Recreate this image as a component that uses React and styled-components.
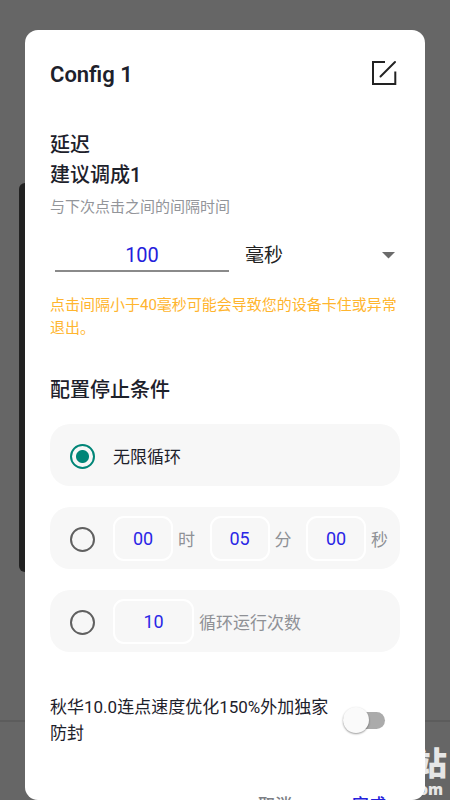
import { useState } from "react";
import styled, { createGlobalStyle } from "styled-components";

const GlobalStyle = createGlobalStyle`
  * {
    box-sizing: border-box;
  }
  body {
    margin: 0;
    background: #666;
    color: #1d212b;
    font-family: Roboto, "Noto Sans CJK SC", sans-serif;
  }
  button, input, select {
    margin: 0;
    padding: 0;
    border: none;
    border-radius: 0;
    background: none;
    color: inherit;
    font: inherit;
  }
`;

const Screen = styled.div`
  display: grid;
  height: 100vh;
  overflow: hidden;
`;

const Backdrop = styled.div`
  grid-area: 1 / 1;
  display: flex;
  flex-direction: column;
  justify-content: space-between;
  padding-top: 183px;
`;

const FloatingBar = styled.div`
  width: 56px;
  height: 389px;
  margin-left: 19px;
  border-radius: 6px;
  background: #212121;
`;

const BottomBar = styled.div`
  height: 80px;
  padding: 25px 3px 0 0;
  border-top: 2px solid #5c5c5c;
  color: #e6e6e6;
  text-align: right;
`;

const SiteName = styled.div`
  font-size: 32px;
  font-weight: 900;
  line-height: 34px;
`;

const SiteDomain = styled.div`
  padding-right: 4px;
  font-family: "Open Sans", sans-serif;
  font-size: 15px;
  font-weight: 800;
  line-height: 16px;
`;

const Overlay = styled.div`
  grid-area: 1 / 1;
  display: flex;
  min-height: 0;
  padding: 30px 25px 0;
  z-index: 1;
`;

const Dialog = styled.form`
  flex: 1;
  min-width: 0;
  padding: 23px 25px 0;
  border-radius: 13px;
  background: #fff;
  overflow: hidden;
`;

const Header = styled.header`
  display: flex;
  align-items: flex-start;
  justify-content: space-between;
  height: 44px;
  margin-bottom: 33px;
`;

const Title = styled.h1`
  margin: 0;
  font-size: 22px;
  font-weight: 600;
  line-height: 44px;
`;

const IconButton = styled.button`
  display: flex;
  padding: 6px 3px;
  color: #222;
  cursor: pointer;
`;

const SectionTitle = styled.h2`
  margin: 0;
  font-size: 20px;
  font-weight: 500;
  line-height: 30px;
`;

const Hint = styled.p`
  margin: 5px 0 21px;
  color: #93959a;
  font-size: 15px;
  line-height: 24px;
`;

const DelayRow = styled.div`
  display: grid;
  grid-template-columns: 1fr 155px;
  gap: 16px;
  padding-left: 5px;
`;

const DelayInput = styled.input`
  width: 100%;
  height: 32px;
  border-bottom: 2px solid #8a8a8a;
  color: #2420dc;
  font-size: 20px;
  text-align: center;
`;

const UnitPicker = styled.div`
  display: grid;
  align-items: center;
  height: 30px;

  select,
  svg {
    grid-area: 1 / 1;
  }

  svg {
    justify-self: end;
    margin-right: 5px;
    pointer-events: none;
  }
`;

const UnitSelect = styled.select`
  appearance: none;
  width: 100%;
  height: 30px;
  color: #222;
  font-size: 19px;
`;

const Warning = styled.p`
  margin: 22px 0 35px;
  color: #ffb52e;
  font-size: 15px;
  line-height: 23px;
`;

const Options = styled.div`
  display: flex;
  flex-direction: column;
  gap: 21px;
  margin-top: 19px;
`;

const Option = styled.div`
  display: flex;
  align-items: center;
  height: 62px;
  padding: 0 12px 0 20px;
  border-radius: 20px;
  background: #f7f7f7;
  font-size: 17px;
`;

const Radio = styled.input`
  appearance: none;
  flex: none;
  width: 25px;
  height: 25px;
  margin: 3px 18px 0 0;
  border: 2px solid #606060;
  border-radius: 50%;

  &:checked {
    border-color: #008577;
    background: radial-gradient(circle, #008577 6px, transparent 7px);
  }
`;

const TimeFields = styled.div`
  display: flex;
  flex: 1;
  justify-content: space-between;
`;

const Field = styled.label`
  display: flex;
  align-items: center;
  gap: 5px;
  color: #8f9196;
`;

const NumberInput = styled.input`
  width: ${(props) => (props.$wide ? 81 : 60)}px;
  height: 45px;
  border: 2px solid #fff;
  border-radius: 11px;
  color: #2a26e6;
  font-size: 18px;
  text-align: center;
`;

const SwitchRow = styled.label`
  display: flex;
  align-items: center;
  justify-content: space-between;
  margin-top: 42px;
  padding-right: 15px;
  font-size: 17px;
  line-height: 26px;
`;

const Switch = styled.input`
  appearance: none;
  display: flex;
  align-items: center;
  flex: none;
  width: 42px;
  height: 17px;
  border-radius: 9px;
  background: #ababab;

  &::before {
    content: "";
    width: 26px;
    height: 26px;
    border-radius: 50%;
    background: #fafafa;
    box-shadow: 0 1px 2px rgba(0, 0, 0, 0.4);
  }

  &:checked {
    justify-content: flex-end;
    background: #80c2bb;
  }
`;

const Actions = styled.div`
  display: flex;
  justify-content: flex-end;
  gap: 60px;
  margin-top: 46px;
  padding: 0 14px 20px 0;
`;

const ActionButton = styled.button`
  color: ${(props) => (props.$primary ? "#2420dc" : "#7d7f85")};
  font-size: 17px;
  font-weight: 500;
  line-height: 26px;
  cursor: pointer;
`;

const EditIcon = () => (
  <svg width="26" height="26" viewBox="0 0 26 26" fill="none" stroke="currentColor" strokeWidth="2">
    <path d="M14 3H2v22h22.3V12.5" />
    <path d="M9.5 17.5L24 3" strokeLinecap="round" />
  </svg>
);

const ArrowIcon = () => (
  <svg width="13" height="7" viewBox="0 0 13 7" fill="#6b6b6b">
    <path d="M0 0h13L6.5 6.5z" />
  </svg>
);

const times = [
  { name: "hours", value: "00", unit: "时" },
  { name: "minutes", value: "05", unit: "分" },
  { name: "seconds", value: "00", unit: "秒" },
];

export default function App() {
  const [mode, setMode] = useState("infinite");

  const radioProps = (value) => ({
    type: "radio",
    name: "stop",
    value,
    checked: mode === value,
    onChange: () => setMode(value),
  });

  return (
    <Screen>
      <GlobalStyle />
      <Backdrop>
        <FloatingBar />
        <BottomBar>
          <SiteName>站</SiteName>
          <SiteDomain>com</SiteDomain>
        </BottomBar>
      </Backdrop>
      <Overlay>
        <Dialog role="dialog" onSubmit={(e) => e.preventDefault()}>
          <Header>
            <Title>Config 1</Title>
            <IconButton type="button" aria-label="编辑">
              <EditIcon />
            </IconButton>
          </Header>

          <SectionTitle>
            延迟
            <br />
            建议调成1
          </SectionTitle>
          <Hint>与下次点击之间的间隔时间</Hint>
          <DelayRow>
            <DelayInput aria-label="延迟" inputMode="numeric" defaultValue="100" />
            <UnitPicker>
              <UnitSelect aria-label="单位">
                <option>毫秒</option>
                <option>秒</option>
                <option>分</option>
              </UnitSelect>
              <ArrowIcon />
            </UnitPicker>
          </DelayRow>
          <Warning>点击间隔小于40毫秒可能会导致您的设备卡住或异常退出。</Warning>

          <SectionTitle>配置停止条件</SectionTitle>
          <Options>
            <Option>
              <Radio id="infinite" {...radioProps("infinite")} />
              <label htmlFor="infinite">无限循环</label>
            </Option>
            <Option>
              <Radio aria-label="运行时间" {...radioProps("time")} />
              <TimeFields>
                {times.map(({ name, value, unit }) => (
                  <Field key={name}>
                    <NumberInput name={name} inputMode="numeric" defaultValue={value} />
                    {unit}
                  </Field>
                ))}
              </TimeFields>
            </Option>
            <Option>
              <Radio aria-label="循环次数" {...radioProps("count")} />
              <Field>
                <NumberInput $wide name="count" inputMode="numeric" defaultValue="10" />
                循环运行次数
              </Field>
            </Option>
          </Options>

          <SwitchRow>
            秋华10.0连点速度优化150%外加独家防封
            <Switch type="checkbox" role="switch" />
          </SwitchRow>

          <Actions>
            <ActionButton type="button">取消</ActionButton>
            <ActionButton type="submit" $primary>
              完成
            </ActionButton>
          </Actions>
        </Dialog>
      </Overlay>
    </Screen>
  );
}
